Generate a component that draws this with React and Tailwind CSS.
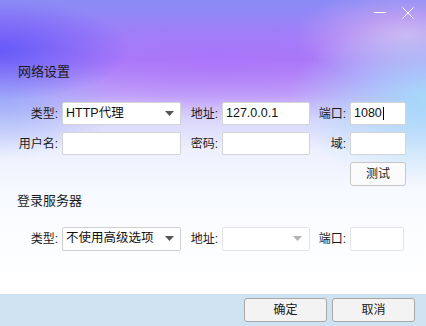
import React from "react";

const font = { fontFamily: '"Liberation Sans", "Noto Sans CJK SC", sans-serif' };

function Arrow({ disabled }) {
  return (
    <svg width="9" height="5" viewBox="0 0 9 5" className="shrink-0">
      <polygon points="0,0 9,0 4.5,5" fill={disabled ? "#b4b4b4" : "#555555"} />
    </svg>
  );
}

function Label({ w, children }) {
  return (
    <div className={`${w} shrink-0 text-right text-[12px] text-[#1a1a1a] pr-[4px]`}>{children}</div>
  );
}

export default function App() {
  return (
    <div
      style={font}
      className="w-[426px] h-[326px] flex flex-col overflow-hidden bg-[radial-gradient(ellipse_130px_50px_at_0px_50px,rgba(95,85,248,0.9),transparent),radial-gradient(ellipse_120px_60px_at_0px_100px,rgba(140,170,248,0.7),transparent),radial-gradient(ellipse_140px_85px_at_430px_100px,rgba(165,218,250,1),transparent),radial-gradient(ellipse_110px_45px_at_405px_35px,rgba(222,185,238,0.85),transparent),radial-gradient(ellipse_220px_45px_at_220px_65px,rgba(170,110,250,0.55),transparent),linear-gradient(to_bottom,#8a8cf6_0px,#9d80f8_30px,#ab7cf8_60px,#c4a6f9_95px,#dad6fb_120px,#edf0fd_150px,#f6f9fe_190px,#fcfdff_240px,#ffffff_290px)]"
    >
      {/* title bar */}
      <div className="h-[30px] flex justify-end items-start pr-[12px] gap-[16px] pt-[7px] shrink-0">
        <svg width="12" height="12" viewBox="0 0 12 12">
          <line x1="0" y1="5.5" x2="12" y2="5.5" stroke="#ffffff" strokeWidth="1" />
        </svg>
        <svg width="12" height="12" viewBox="0 0 12 12">
          <line x1="0.5" y1="0.5" x2="11.5" y2="11.5" stroke="#ffffff" strokeWidth="1" />
          <line x1="11.5" y1="0.5" x2="0.5" y2="11.5" stroke="#ffffff" strokeWidth="1" />
        </svg>
      </div>

      <div className="flex-1 flex flex-col">
        <div className="mt-[33px] ml-[18px] text-[13px] leading-[18px] text-[#1a1a1a]">网络设置</div>

        {/* row 1 */}
        <div className="mt-[21px] flex items-center h-[23px]">
          <Label w="w-[62px]">类型:</Label>
          <div className="w-[119px] h-[23px] bg-white border border-[#d4d4d4] rounded-[2px] flex items-center justify-between pl-[3px] pr-[6px]">
            <span className="text-[12.5px] text-[#111]">HTTP代理</span>
            <Arrow />
          </div>
          <Label w="w-[41px]">地址:</Label>
          <div className="w-[88px] h-[23px] bg-white border border-[#d4d4d4] rounded-[2px] flex items-center pl-[3px]">
            <span className="text-[12.5px] text-[#111]">127.0.0.1</span>
          </div>
          <Label w="w-[40px]">端口:</Label>
          <div className="w-[56px] h-[23px] bg-white border border-[#d4d4d4] rounded-[2px] flex items-center pl-[3px]">
            <span className="text-[12.5px] text-[#111]">1080</span>
            <span className="w-[1px] h-[13px] bg-black ml-[1px]"></span>
          </div>
        </div>

        {/* row 2 */}
        <div className="mt-[7px] flex items-center h-[23px]">
          <Label w="w-[62px]">用户名:</Label>
          <div className="w-[119px] h-[23px] bg-white border border-[#d4d4d4] rounded-[2px]"></div>
          <Label w="w-[41px]">密码:</Label>
          <div className="w-[88px] h-[23px] bg-white border border-[#d4d4d4] rounded-[2px]"></div>
          <Label w="w-[40px]">域:</Label>
          <div className="w-[56px] h-[23px] bg-white border border-[#d4d4d4] rounded-[2px]"></div>
        </div>

        {/* test button */}
        <div className="mt-[7px] flex justify-end pr-[20px]">
          <div className="w-[56px] h-[24px] bg-[#fbfbfb] border border-[#c6c6c6] rounded-[3px] flex items-center justify-center text-[12px] text-[#1a1a1a]">
            测试
          </div>
        </div>

        <div className="mt-[6px] ml-[17px] text-[13px] leading-[18px] text-[#1a1a1a]">登录服务器</div>

        {/* row 3 */}
        <div className="mt-[17px] flex items-center h-[23px]">
          <Label w="w-[62px]">类型:</Label>
          <div className="w-[119px] h-[24px] bg-white border border-[#d0d0d0] rounded-[2px] flex items-center justify-between pl-[3px] pr-[6px]">
            <span className="text-[12.5px] text-[#111]">不使用高级选项</span>
            <Arrow />
          </div>
          <Label w="w-[41px]">地址:</Label>
          <div className="w-[88px] h-[24px] bg-white border border-[#e4e4e4] rounded-[2px] flex items-center justify-end pr-[7px]">
            <Arrow disabled />
          </div>
          <Label w="w-[40px]">端口:</Label>
          <div className="w-[54px] h-[24px] bg-white border border-[#e4e4e4] rounded-[2px]"></div>
        </div>

        <div className="flex-1"></div>
      </div>

      {/* footer */}
      <div className="h-[32px] shrink-0 bg-[#cee2f2] flex items-center justify-end gap-[5px] pr-[11px]">
        <div className="w-[83px] h-[24px] bg-[#f3f3f3] border border-[#a8a8a8] rounded-[3px] flex items-center justify-center text-[12px] text-[#1a1a1a]">
          确定
        </div>
        <div className="w-[83px] h-[24px] bg-[#f3f3f3] border border-[#a8a8a8] rounded-[3px] flex items-center justify-center text-[12px] text-[#1a1a1a]">
          取消
        </div>
      </div>
    </div>
  );
}
